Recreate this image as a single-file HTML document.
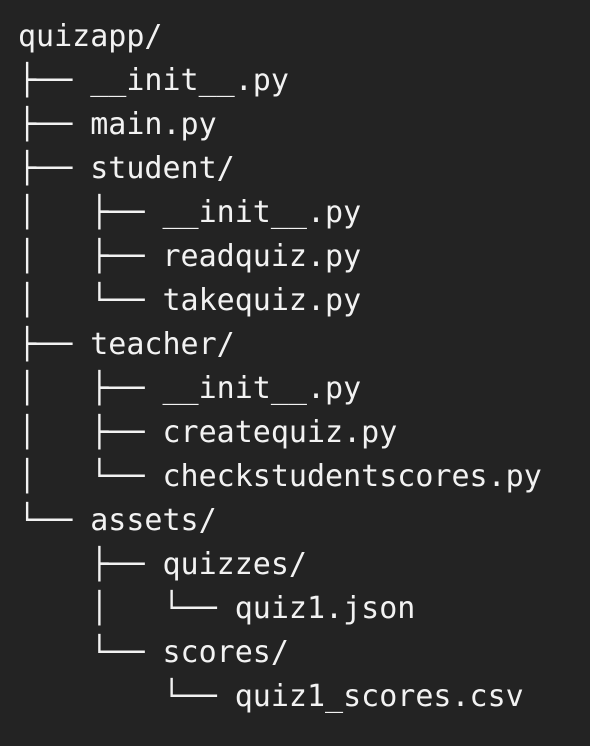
<!DOCTYPE html>
<html><head><style>
html,body{margin:0;padding:0;background:#232323;width:590px;height:746px;overflow:hidden}
pre{margin:0;position:absolute;left:18px;top:15px;font-family:"DejaVu Sans Mono","Liberation Mono",monospace;font-size:30px;line-height:44px;color:#f2f2f2}
</style></head><body>
<pre>quizapp/
├── __init__.py
├── main.py
├── student/
│   ├── __init__.py
│   ├── readquiz.py
│   └── takequiz.py
├── teacher/
│   ├── __init__.py
│   ├── createquiz.py
│   └── checkstudentscores.py
└── assets/
    ├── quizzes/
    │   └── quiz1.json
    └── scores/
        └── quiz1_scores.csv</pre>
</body></html>
